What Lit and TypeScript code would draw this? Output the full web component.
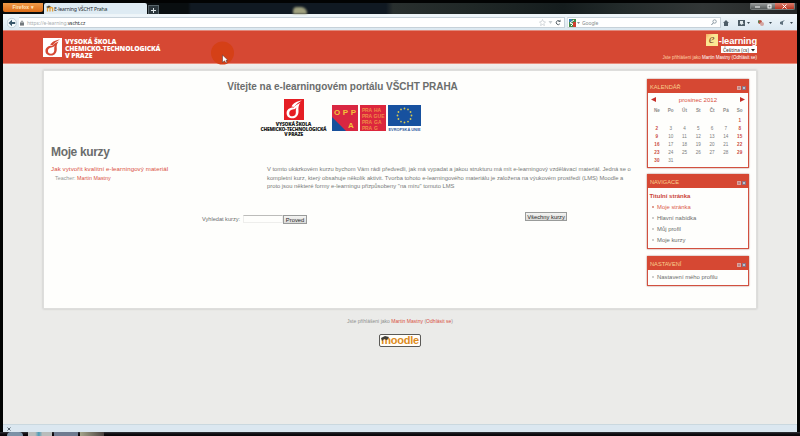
import { LitElement, html, css, svg } from "lit";
import { customElement, property } from "lit/decorators.js";

const flame = (bg: string, fg: string) => svg`
  <rect width="20" height="20" fill=${bg}></rect>
  <path d="M17.8 1.5C13 2.200 9 4 7.600 7.200L10.200 7.600C12 5 15 3.200 17.800 1.500Z" fill=${fg}></path>
  <path fill-rule="evenodd" d="M16.400 3.600C14.500 6 14.200 8 14.500 11C14.800 15.400 12.400 18.400 8.400 18.400C5 18.400 2.600 16.600 2.600 13.600C2.600 10.200 5.400 8 9.800 8.200C11 6.600 13 5 16.400 3.600ZM9.600 9.800C6.800 10 5.200 11.600 5.200 13.700C5.200 15.600 6.600 16.600 8.600 16.500C11.200 16.300 12.200 14.200 11.800 11.200C11.700 10 12 9 12.600 8C11.500 9 10.800 9.800 9.600 9.800Z" fill=${fg}></path>`;

@customElement("side-block")
class SideBlock extends LitElement {
  @property() heading = "";
  static styles = css`
    :host { display: block; box-sizing: border-box; background: #fefefc; border: 1px solid #d2503f; border-top: 0; box-shadow: 0 0 1.5px #a76c62; }
    .head { height: 14px; margin: 0 -1px; padding: 1px 3px 0; background: #d64833; display: flex; align-items: center; justify-content: space-between; color: #f9cf8d; font-size: 5.7px; box-sizing: border-box; }
    .tools { display: flex; gap: 1px; padding-top: 3px; }
    .tools i { width: 4px; height: 4px; box-sizing: border-box; background: #b98589; border: 1px solid #dca39c; }
    .tools i + i { background: #bcc4cc; border-color: #8d7184; }
  `;
  render() {
    return html`<div class="head"><span>${this.heading}</span><span class="tools"><i></i><i></i></span></div><slot></slot>`;
  }
}

@customElement("app-root")
class AppRoot extends LitElement {
  static styles = css`
    :host { display: block; width: 800px; height: 436px; overflow: hidden; background: #020303; font-family: "Liberation Sans", Arial, sans-serif; color: #6b6d6c; position: relative; }
    * { box-sizing: border-box; }
    svg { display: block; flex: none; }
    .window { margin: 0 3px; height: 432px; padding-top: 3px; display: flex; flex-direction: column; }
    .title { height: 11px; display: flex; align-items: flex-end; background: linear-gradient(90deg, #090e10 0 185px, #101922 188px 383px, #29302f 390px, #202827 470px, #151d1e 560px, #232b2b 620px, #323737 700px, #242626); flex: none; }
    .menu { width: 40px; height: 9px; margin-bottom: 2px; background: linear-gradient(#ef9a48, #dc6c17); color: #ffe3bd; font: bold 5px/8px "Liberation Sans", sans-serif; text-align: center; border-radius: 0 0 2px 2px; }
    .tab { margin-left: 1px; width: 103px; height: 11px; background: #deebf3; display: flex; align-items: center; padding-left: 2px; gap: 0; font: 5.2px "Noto Sans", sans-serif; letter-spacing: -.2px; color: #252c31; border-radius: 2px 2px 0 0; white-space: nowrap; }
    .plus { width: 11px; height: 9px; margin-left: 1px; background: #2b363c; border: 1px solid #58656b; border-bottom: 0; display: grid; place-items: center; }
    .glare { width: 14px; height: 7px; margin-left: 134px; background: #a0a17f; border-radius: 4px 6px 0 0; filter: blur(1.2px); }
    .controls { margin-left: auto; margin-right: 2px; align-self: flex-start; display: flex; height: 7px; border: 1px solid #777c7c; border-top: 0; border-radius: 0 0 2px 2px; }
    .controls span { width: 12px; background: linear-gradient(#9b9e9e, #535858); display: grid; place-items: center; }
    .controls span:last-child { width: 19px; background: linear-gradient(#d98070, #bb3521); }
    .bar { height: 16px; background: linear-gradient(#eff6fa, #dbe8f1); display: flex; align-items: center; padding: 0 1px 0 4px; flex: none; border-top: 1px solid #eef5f8; }
    .field { height: 11px; background: #fff; border: 1px solid #c6d1d9; border-left-color: #dbe3e8; display: flex; align-items: center; font: 5px "Noto Sans", sans-serif; letter-spacing: -.1px; color: #a9aeb1; white-space: nowrap; }
    .url { width: 546px; padding-left: 1px; gap: 3px; margin-left: 2px; border-left: 0; }
    .url b { font-weight: 400; color: #262a2c; }
    .url .end { margin-left: auto; display: flex; align-items: center; gap: 2px; padding-right: 3px; }
    .search { width: 154px; margin-left: 2px; padding: 0 3px 0 1px; }
    .search span { margin-left: 1px; color: #888d90; }
    .search svg:last-child { margin-left: auto; }
    .bar > .icons { margin-left: auto; }
    .banner { height: 34px; background: #d64833; border-top: 1px solid #e1897c; border-bottom: 1px solid #e98b7a; color: #fff; display: flex; justify-content: space-between; padding: 7px 40px 0; flex: none; }
    .brand { display: flex; gap: 3px; }
    .brand div { font: 800 6.8px/7.1px "Open Sans", sans-serif; white-space: nowrap; letter-spacing: -.13px; }
    .login { text-align: right; display: flex; flex-direction: column; align-items: flex-end; margin-top: -4px; }
    .el { display: flex; align-items: flex-end; gap: 1px; font: bold 9.3px/10px "Liberation Sans", sans-serif; letter-spacing: -.1px; }
    .el i { background: linear-gradient(135deg, #f6a860, #fbe792 35%); color: #8b542f; font: italic 13px/9px "Liberation Serif", serif; width: 12px; height: 12px; text-align: center; }
    .select { width: 36px; height: 7px; background: #fff; color: #38302d; font: 4.9px/6px "Noto Sans", sans-serif; white-space: nowrap; display: flex; align-items: center; justify-content: space-between; padding: 0 2px; }
    .who { font-size: 4.5px; line-height: 7px; margin-top: 1px; color: #ffd2a6; white-space: nowrap; }
    .who b { font-weight: 400; color: #fff; }
    .page { flex: 1; background: linear-gradient(#f1eeec, #ebebe9 4px); padding: 6px 40px 0; box-shadow: inset -1px 0 #f5f5f3; min-height: 0; }
    .card { height: 239px; background: #fefefc; border: 1px solid #dededc; box-shadow: 0 0 2px #bdbdbb; display: flex; padding-right: 7px; }
    .main { width: 603px; padding-left: 7px; }
    h1 { margin: 0; height: 28px; padding-top: 3px; display: flex; align-items: center; justify-content: center; font-size: 10px; letter-spacing: -.05px; width: 583px; white-space: nowrap; }
    .logos { height: 39px; display: flex; width: 579px; justify-content: center; gap: 2px; }
    .school { width: 66px; margin-right: 3px; display: flex; flex-direction: column; align-items: center; font: 800 4.9px/4.8px "Open Sans", sans-serif; color: #211c1b; text-align: center; letter-spacing: -.22px; white-space: nowrap; }
    .school svg { margin-bottom: 2px; }
    .tile { height: 28px; margin-top: 6px; }
    h2 { margin: 0; height: 26px; display: flex; align-items: center; padding-top: 1px; font-size: 12px; letter-spacing: -.35px; }
    .course { display: flex; line-height: 8.6px; height: 48px; padding-top: 1px; }
    .left { width: 216px; font-size: 6.1px; letter-spacing: .1px; color: #d9503f; white-space: nowrap; }
    .teacher { font-size: 5.3px; letter-spacing: .03px; padding-left: 4px; color: #949795; }
    .teacher a, .foot a { color: #d9503f; }
    .desc { font-size: 5.8px; white-space: nowrap; color: #777a79; }
    .forms { display: flex; font-size: 5.6px; align-items: center; height: 14px; padding-left: 151px; }
    .input { width: 40px; height: 8px; border: 1px solid #eeeeec; border-top-color: #bcbcba; margin-left: 3px; }
    .button { height: 9px; border: 1px solid #999b9a; background: linear-gradient(#f4f4f2, #dbdbd9); color: #282a29; font-size: 5.8px; line-height: 8px; text-align: center; white-space: nowrap; }
    .proved { width: 24px; }
    .all { width: 42px; margin-left: 218px; margin-bottom: 5px; }
    .side { width: 102px; padding-top: 8px; display: flex; flex-direction: column; }
    .cal { height: 89px; } .nav { height: 75px; margin-top: 6px; } .set { height: 30px; margin-top: 7px; }
    .month { height: 12px; display: flex; align-items: center; justify-content: space-between; padding: 0 3px; color: #d9503f; font-size: 6.1px; }
    .days { display: grid; grid-template-columns: repeat(7, 13.8px); grid-template-rows: 11px repeat(6, 8px); font-size: 4.6px; text-align: center; align-items: center; padding-left: 2px; color: #7b7d7c; height: 61px; }
    .days b { color: #c94b43; } .days .h { color: #8c8c8a; font-weight: 700; }
    .item { height: 11.3px; line-height: 11.3px; font-size: 5.9px; padding-left: 9px; position: relative; white-space: nowrap; }
    .item::before { content: ""; position: absolute; left: 4px; top: 4px; width: 2px; height: 2px; background: #cfcfcd; }
    .item.active::before { background: #df9f93; }
    .setting { margin-top: 2px; }
    .top { padding: 3px 0 0 1.5px; font-weight: 700; font-size: 6px; height: 13.5px; line-height: 10px; color: #cb4439; }
    .active { color: #dc5c4c; }
    .foot { padding-top: 8px; display: flex; flex-direction: column; align-items: center; font-size: 5.05px; line-height: 9px; gap: 8px; color: #8e908f; }
    .moodle { width: 42px; height: 13px; border: 1.2px solid #5b5a57; border-radius: 2px; background: #fffefa; color: #dd8b1d; font: bold 11px/10px "Liberation Sans", sans-serif; text-align: center; position: relative; letter-spacing: -.25px; }
    .moodle svg { position: absolute; left: 1px; top: 1px; }
    .status { height: 8px; background: #dbe7f0; border-top: 1px solid #cad8df; display: flex; align-items: center; padding-left: 4px; flex: none; }
    .task { height: 4px; display: flex; background: linear-gradient(#34363b, #100b10 2px, #080508); gap: 2px; padding-left: 7px; }
    .task i { height: 4px; width: 24px; background: linear-gradient(90deg, #9eaab0, #c4cfd2); }
    .task i:first-child { width: 16px; margin-right: 3px; border-radius: 8px 8px 0 0; background: #7b91a6; }
    .task i:nth-child(2) { background: linear-gradient(90deg, #b9bcbb 30%, #4c9cb8 45%, #b9bcbb 60%); }
    .task i:nth-child(3) { background: #6f7b90; }
    .task i:nth-child(4) { background: linear-gradient(90deg, #a5a58b, #4a4240); }
    .pointer { position: absolute; left: 210px; top: 41px; }
  `;

  render() {
    const weeks = ["", "", "", "", "", "", ...Array.from({ length: 31 }, (_, i) => String(i + 1))];
    const rings = Array.from({ length: 12 }, (_, i) => i * Math.PI / 6);
    return html`
      <div class="window">
        <div class="title">
          <div class="menu">Firefox ▾</div>
          <div class="tab"><svg width="8" height="7" viewBox="0 0 8 7"><path d="M1.500 6.500V3.200Q2.900 1.800 4 3.200V6.500M4 3.200Q5.600 1.800 6.600 3.200V6.500" fill="none" stroke="#e4a037" stroke-width="1.3"></path><path d="M0 2L3 .6L5 1.6L2 3Z" fill="#514b3b"></path></svg>E-learning VŠCHT Praha</div>
          <div class="plus"><svg width="5" height="5"><path d="M2.5 0V5M0 2.5H5" stroke="#dce4e7"></path></svg></div>
          <div class="glare"></div>
          <div class="controls"><span><svg width="5" height="4"><path d="M0 3H5" stroke="#fff"></path></svg></span><span><svg width="5" height="5"><rect x="1" y="1" width="3" height="3" fill="none" stroke="#fff"></rect></svg></span><span><svg width="5" height="5"><path d="M.5 .5L4.5 4.5M4.500 .5L.5 4.500" stroke="#fff"></path></svg></span></div>
        </div>
        <div class="bar">
          <svg width="10" height="12" viewBox="0 0 10 12"><circle cx="4.8" cy="6" r="4.7" fill="#f3f9fc" stroke="#b2c2cc" stroke-width=".7"></circle><path d="M1.5 6L5 2.800V4.900H8.200V7.100H5V9.200Z" fill="#37566a"></path></svg>
          <div class="field url"><svg width="4" height="6"><path d="M1 3V1.700Q2 0 3 1.700V3" fill="none" stroke="#747a7e" stroke-width=".8"></path><rect y="2.6" width="4" height="3" fill="#747a7e"></rect></svg><span>https://e-learning.<b>vscht.cz</b></span>
            <span class="end"><svg width="7" height="7" viewBox="0 0 14 14"><path d="M7 1L9 5.200L13 5.800L10 9L10.800 13L7 11L3.200 13L4 9L1 5.800L5 5.200Z" fill="none" stroke="#aeb7bd"></path></svg><svg width="5" height="5"><path d="M.5 1H4.500L2.500 4Z" fill="#c7ced2"></path></svg><svg width="6" height="7"><path d="M4.800 4.800A2 2 0 1 1 4.400 2" fill="none" stroke="#59636a"></path><path d="M5.500 .5V3H3Z" fill="#59636a"></path></svg></span></div>
          <div class="field search"><svg width="7" height="8"><rect width="7" height="8" fill="#438b4b"></rect><path d="M0 0H3V3H0Z" fill="#3f81b6"></path><path d="M4 3H7V8H4Z" fill="#d04032"></path><path d="M5 1L1 4L4 5L2 7" fill="none" stroke="#fff"></path></svg><svg width="5" height="4"><path d="M1 1H4L2.500 3Z" fill="#858c90"></path></svg><span>Google</span><svg width="6" height="7"><circle cx="3.6" cy="2.5" r="1.7" fill="none" stroke="#7b8b96" stroke-width=".8"></circle><path d="M2.400 3.800L.4 6" stroke="#7b8b96"></path></svg></div>
          <svg class="icons" width="73" height="10" viewBox="0 0 73 10"><path d="M0 5L3 2L6 5H5V8H1V5Z" fill="#4e5e69"></path><rect x="15" y="2" width="7" height="6" fill="#4d5c66"></rect><path d="M17 3H20V5H21L18.500 7L16.500 5H17Z" fill="#e4ecef"></path><path d="M24 4H27L25.500 6Z M46 4H49L47.500 6Z M67 4H70L68.500 6Z" fill="#3d4b55"></path><circle cx="37" cy="4" r="2" fill="#bd5144"></circle><circle cx="39" cy="6" r="2" fill="#d3a4a0"></circle><path d="M35 2L37 4L35 5Z" fill="#53854d"></path><path d="M57 4L62 2L60 4L60 7L57 6Z" fill="#5e707c"></path></svg>
        </div>
        <div class="banner">
          <div class="brand"><svg width="19" height="19" viewBox="0 0 20 20">${flame("#fff", "#d64833")}</svg><div>VYSOKÁ ŠKOLA<br>CHEMICKO-TECHNOLOGICKÁ<br>V PRAZE</div></div>
          <div class="login"><div class="el"><i>e</i><span>-learning</span></div><div class="select"><span>Čeština (cs)</span><svg width="4" height="4"><path d="M0 1H4L2 3.500Z" fill="#252220"></path></svg></div><div class="who">Jste přihlášeni jako <b>Martin Mastny (Odhlásit se)</b></div></div>
        </div>
        <div class="page">
          <div class="card">
            <div class="main">
              <h1>Vítejte na e-learningovém portálu VŠCHT PRAHA</h1>
              <div class="logos">
                <div class="school"><svg width="20" height="21" viewBox="0 0 20 20" preserveAspectRatio="none">${flame("#e51e24", "#fff")}</svg>VYSOKÁ ŠKOLA<br>CHEMICKO-TECHNOLOGICKÁ<br>V PRAZE</div>
                <svg class="tile" width="26" height="28"><rect width="26" height="26" fill="#d92741"></rect><path d="M0 12L14 26H0Z" fill="#18509b"></path><g fill="#f3c338" font-weight="700" font-size="8"><text x="2" y="10" textLength="22">OPP</text><text x="16" y="23">A</text></g></svg>
                <svg class="tile" width="26" height="28"><rect width="26" height="26" fill="#dc263c"></rect><g fill="#f08a47" font-weight="700" font-size="5"><text x="2" y="6.500" textLength="10">PRA</text><text x="14" y="6.500">HA</text><text x="2" y="12.500" textLength="10">PRA</text><text x="13.500" y="12.500" textLength="11">GUE</text><text x="2" y="18.500" textLength="10">PRA</text><text x="14" y="18.500">GA</text><text x="2" y="24.500" textLength="10">PRA</text><text x="14" y="24.500">G</text></g></svg>
                <svg class="tile" width="33" height="28"><rect width="33" height="21" fill="#17519f"></rect>${rings.map(a => svg`<circle cx=${16.5 + 7 * Math.sin(a)} cy=${10.5 - 7 * Math.cos(a)} r=".9" fill="#d6c853"></circle>`)}<text x=".5" y="25.500" textLength="32" lengthAdjust="spacingAndGlyphs" font-size="4.4" font-weight="700" fill="#315ca0">EVROPSKÁ UNIE</text></svg>
              </div>
              <h2>Moje kurzy</h2>
              <div class="course"><div class="left">Jak vytvořit kvalitní e-learningový materiál<div class="teacher">Teacher: <a>Martin Mastny</a></div></div>
                <div class="desc">V tomto ukázkovém kurzu bychom Vám rádi předvedli, jak má vypadat a jakou strukturu má mít e-learningový vzdělávací materiál. Jedná se o<br>kompletní kurz, který obsahuje několik aktivit. Tvorba tohoto e-learningového materiálu je založena na výukovém prostředí (LMS) Moodle a<br>proto jsou některé formy e-learningu přizpůsobeny "na míru" tomuto LMS</div></div>
              <div class="forms"><span>Vyhledat kurzy:</span><div class="input"></div><div class="button proved">Proved</div><div class="button all">Všechny kurzy</div></div>
            </div>
            <div class="side">
              <side-block class="cal" heading="KALENDÁŘ"><div class="month"><svg width="5" height="5"><path d="M5 0V5L0 2.500Z" fill="#c6302a"></path></svg><span>prosinec 2012</span><svg width="5" height="5"><path d="M0 0V5L5 2.500Z" fill="#c6302a"></path></svg></div>
                <div class="days">${["Ne", "Po", "Út", "St", "Čt", "Pá", "So"].map(d => html`<span class="h">${d}</span>`)}${weeks.map((d, i) => i % 7 === 0 || i % 7 === 6 ? html`<b>${d}</b>` : html`<span>${d}</span>`)}</div></side-block>
              <side-block class="nav" heading="NAVIGACE"><div class="top">Titulní stránka</div><div class="item active">Moje stránka</div><div class="item">Hlavní nabídka</div><div class="item">Můj profil</div><div class="item">Moje kurzy</div></side-block>
              <side-block class="set" heading="NASTAVENÍ"><div class="item setting">Nastavení mého profilu</div></side-block>
            </div>
          </div>
          <div class="foot"><span>Jste přihlášeni jako <a>Martin Mastny</a> (<a>Odhlásit se</a>)</span><div class="moodle"><svg width="9" height="6"><path d="M0 2L4 0L8 1L6 4L3 3L1 5Z" fill="#403e38"></path></svg>moodle</div></div>
        </div>
        <div class="status"><svg width="4" height="4"><path d="M.5 .5L3.500 3.500M3.500 .5L.5 3.500" stroke="#53616b"></path></svg></div>
      </div>
      <div class="task"><i></i><i></i><i></i><i></i></div>
      <svg class="pointer" width="26" height="26"><circle cx="12.500" cy="12" r="11.500" fill="#d54017"></circle><path d="M12.500 14V21.500L14.500 19.800L16 22L17 21.400L16 19.300H18Z" fill="#fff" stroke="#4e2924" stroke-width=".5"></path></svg>`;
  }
}
